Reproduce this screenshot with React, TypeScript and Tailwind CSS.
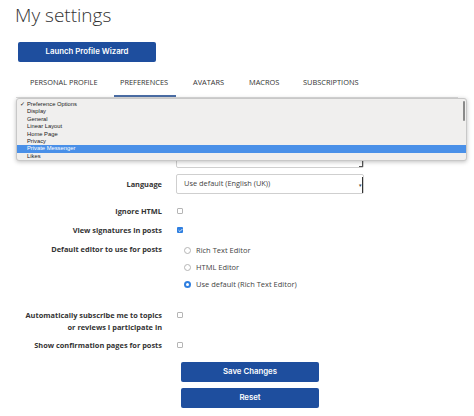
import { Check } from 'lucide-react';

const tabs = [
  { label: 'PERSONAL PROFILE', cls: 'w-[84px] border-transparent' },
  { label: 'PREFERENCES', cls: 'w-[62px] px-[6px] border-[#4b6ea6]' },
  { label: 'AVATARS', cls: 'ml-[17px] w-[56px] border-transparent' },
  { label: 'MACROS', cls: 'w-[54px] border-transparent' },
  { label: 'SUBSCRIPTIONS', cls: 'border-transparent' },
];
const options = ['Preference Options', 'Display', 'General', 'Linear Layout', 'Home Page', 'Privacy', 'Private Messenger', 'Likes'];

function Box({ checked }: { checked?: boolean }) {
  return checked ? (
    <span className="flex h-[6px] w-[6px] items-center justify-center rounded-[1px] bg-[#2f7fe0]">
      <Check className="h-[5px] w-[5px] text-white" strokeWidth={4} />
    </span>
  ) : (
    <span className="block h-[6px] w-[6px] rounded-[1px] border border-[#b5b5b5] bg-white" />
  );
}

function Radio({ checked, label }: { checked?: boolean; label: string }) {
  return (
    <div className="flex h-[17px] items-center gap-[5px]">
      {checked ? (
        <span className="flex h-[7px] w-[7px] items-center justify-center rounded-full bg-[#2f7fe0]">
          <span className="h-[3px] w-[3px] rounded-full bg-white" />
        </span>
      ) : (
        <span className="block h-[7px] w-[7px] rounded-full border border-[#b5b5b5] bg-white" />
      )}
      <span className="text-[7.5px] text-[#444]">{label}</span>
    </div>
  );
}

function Row({ label, children, className = '' }: { label: React.ReactNode; children: React.ReactNode; className?: string }) {
  return (
    <div className={`grid grid-cols-[162px_1fr] gap-x-[14px] ${className}`}>
      <div className="text-right text-[7.4px] font-bold leading-[12px] text-[#333]">{label}</div>
      <div>{children}</div>
    </div>
  );
}

const blueBtn =
  "flex h-[20px] w-[138px] items-center justify-center rounded-[2px] bg-[#1e4e9e] font-['Inter',sans-serif] text-[7.8px] font-semibold text-white";

export default function App() {
  return (
    <div className="h-[416px] w-[474px] overflow-hidden bg-white font-['Open_Sans',sans-serif]">
      <h1 className="pl-[15px] pt-[2px] text-[19px] font-light leading-[26px] text-[#333]">My settings</h1>

      <button className={`ml-[18px] mt-[14px] ${blueBtn}`}>Launch Profile Wizard</button>

      <div className="mx-[16px] mt-[12px] flex border-b border-[#dcdcdc] pl-[14px]">
        {tabs.map((t) => (
          <div
            key={t.label}
            className={`shrink-0 whitespace-nowrap border-b-2 pb-[8px] pt-[4px] text-[7.4px] leading-[9px] text-[#333] ${t.cls}`}
          >
            {t.label}
          </div>
        ))}
      </div>

      <div className="relative h-[71px]">
        <div className="absolute bottom-[1px] left-[176px] h-[20px] w-[188px] rounded-[2px] border border-[#cfcfcf] bg-white">
          <span className="absolute bottom-0 right-0 h-[6px] w-[4px] border-b border-r border-[#555]" />
        </div>
        <div className="absolute left-[16px] top-0 h-[63px] w-[451px] rounded-[3px] border border-[#c8c8c8] bg-[#f0efee] py-[2px] shadow-[0_1px_4px_rgba(0,0,0,0.25)]">
          {options.map((o, i) => (
            <div
              key={o}
              className={`relative h-[7.4px] pl-[10px] font-['Liberation_Sans',sans-serif] text-[5.8px] leading-[7.4px] ${
                i === 6 ? 'bg-[#4a90e8] text-white' : 'text-[#222]'
              }`}
            >
              {i === 0 && <span className="absolute left-[3px]">✓</span>}
              {o}
            </div>
          ))}
          <span className="absolute right-[1px] top-[2px] h-[20px] w-[2px] rounded bg-[#8a8a8a]" />
        </div>
      </div>

      <div className="mt-[5px]">
        <Row label={<span className="leading-[20px]">Language</span>}>
          <div className="relative flex h-[20px] w-[188px] items-center rounded-[2px] border border-[#cfcfcf] bg-white pl-[7px] text-[7.4px] text-[#444]">
            Use default (English (UK))
            <span className="absolute right-0 top-[2px] flex h-[16px] w-[4px] items-center justify-center border-r border-[#333] text-[5px] leading-none">▾</span>
          </div>
        </Row>

        <Row label="Ignore HTML" className="mt-[11px]">
          <div className="flex h-[12px] items-center pl-[1px]"><Box /></div>
        </Row>

        <Row label="View signatures in posts" className="mt-[7px]">
          <div className="flex h-[12px] items-center pl-[1px]"><Box checked /></div>
        </Row>

        <Row label="Default editor to use for posts" className="mt-[7px]">
          <div className="-mt-[1px] pl-[8px]">
            <Radio label="Rich Text Editor" />
            <Radio label="HTML Editor" />
            <Radio checked label="Use default (Rich Text Editor)" />
          </div>
        </Row>

        <Row
          label={
            <>
              Automatically subscribe me to topics
              <br />
              or reviews I participate in
            </>
          }
          className="mt-[16px]"
        >
          <div className="flex h-[12px] items-center pl-[1px]"><Box /></div>
        </Row>

        <Row label="Show confirmation pages for posts" className="mt-[6px]">
          <div className="flex h-[12px] items-center pl-[1px]"><Box /></div>
        </Row>

        <Row label="" className="mt-[11px]">
          <div className="flex flex-col gap-[6px] pl-[5px]">
            <button className={blueBtn}>Save Changes</button>
            <button className={blueBtn}>Reset</button>
          </div>
        </Row>
      </div>
    </div>
  );
}
